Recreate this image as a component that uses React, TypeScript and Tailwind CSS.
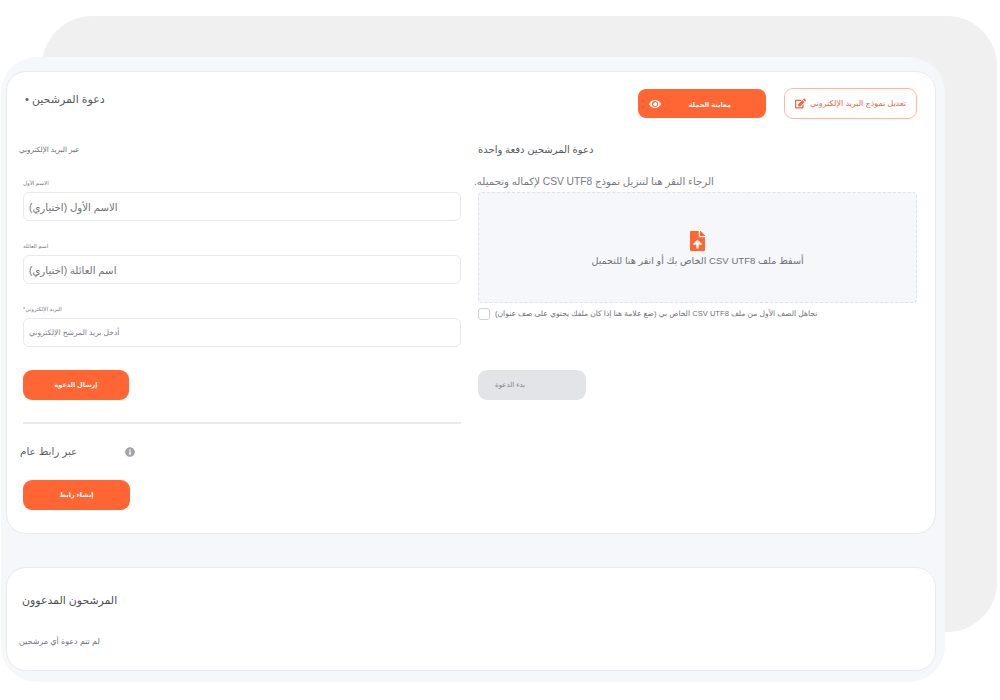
import { FaEdit, FaEye, FaFileUpload, FaInfoCircle } from "react-icons/fa";

const FONT = "font-['Liberation_Sans','DejaVu_Sans',sans-serif]";

function Field({ label, placeholder, small, mt }: { label: string; placeholder: string; small?: boolean; mt: string }) {
  return (
    <div className={mt}>
      <p dir="rtl" className="w-fit h-[10px] text-[5.5px] leading-[10px] text-[#777a80]">
        {label}
      </p>
      <div className="mt-[4px] h-[29px] flex items-center pl-[5px] bg-white border border-[#e9eaee] rounded-[6px]">
        <span dir="rtl" className={small ? "text-[7.6px] text-[#7b7d83]" : "mt-[2px] text-[10.2px] text-[#6f7176]"}>
          {placeholder}
        </span>
      </div>
    </div>
  );
}

function OrangeButton({ label, width }: { label: string; width: string }) {
  return (
    <button className={`${width} h-[30px] flex items-center justify-center bg-[#ff6633] rounded-[9px] text-white text-[6.5px] font-bold`}>
      <span dir="rtl">{label}</span>
    </button>
  );
}

export default function App() {
  return (
    <div className={`relative h-[700px] w-[1000px] overflow-hidden bg-white ${FONT}`}>
      {/* grey shape behind the panel */}
      <div className="absolute left-[42px] top-[16px] w-[955px] h-[616px] bg-[#f0f0f1] rounded-[50px]" />

      <div className="relative ml-[1px] top-[57px] w-[944px] h-[625px] bg-[#f6f7fb] rounded-[36px] pl-[5px] pr-[9px] pt-[14px]">
        <section className="h-[463px] bg-white rounded-[20px] border border-[#e9eaf0] pl-[16px] pr-[18px] pt-[16px]">
          <div className="flex justify-between items-start">
            <h1 dir="rtl" className="ml-[2px] mt-[3px] text-[11px] leading-[16px] text-[#55575c]">
              دعوة المرشحين •
            </h1>
            <div className="flex items-start gap-[18px]">
              <button className="mt-[1px] w-[128px] h-[29px] flex items-center justify-between pl-[11px] pr-[35px] bg-[#ff6633] rounded-[8px] text-white text-[6.7px] font-bold">
                <FaEye className="w-[12px] h-[12px]" />
                <span dir="rtl" className="mt-[3px]">معاينة الحملة</span>
              </button>
              <button className="w-[133px] h-[31px] flex items-center justify-center gap-[4px] bg-white border border-[#ffb9a3] rounded-[9px] text-[#e8663c] text-[8px]">
                <FaEdit className="w-[11px] h-[11px]" />
                <span dir="rtl" className="mt-[1px]">تعديل نموذج البريد الإلكتروني</span>
              </button>
            </div>
          </div>

          <div className="grid grid-cols-[438px_439px] gap-[17px]">
            <div>
              <p dir="rtl" className="w-fit -ml-[4px] mt-[25px] h-[12px] text-[7.2px] leading-[12px] text-[#6d6f74]">
                عبر البريد الإلكتروني
              </p>
              <Field mt="mt-[22px]" label="الاسم الأول" placeholder="الاسم الأول (اختياري)" />
              <Field mt="mt-[20px]" label="اسم العائلة" placeholder="اسم العائلة (اختياري)" />
              <Field mt="mt-[20px]" label="البريد الإلكتروني*" placeholder="أدخل بريد المرشح الإلكتروني" small />
              <div className="mt-[23px]">
                <OrangeButton label="إرسال الدعوة" width="w-[106px]" />
              </div>
              <hr className="mt-[22px] border-0 h-[2px] bg-[#e9eaec]" />
              <div className="mt-[18px] -ml-[3px] w-[115px] flex items-center justify-between">
                <span dir="rtl" className="text-[10.4px] leading-[20px] text-[#5d5f64]">عبر رابط عام</span>
                <FaInfoCircle className="w-[10px] h-[10px] text-[#a3a5aa]" />
              </div>
              <div className="mt-[18px]">
                <OrangeButton label="إنشاء رابط" width="w-[107px]" />
              </div>
            </div>

            <div>
              <p dir="rtl" className="w-fit mt-[23px] h-[16px] text-[10px] leading-[16px] text-[#55575c]">
                دعوة المرشحين دفعة واحدة
              </p>
              <p dir="rtl" className="w-fit -ml-[4px] mt-[16px] h-[16px] text-[10.2px] leading-[16px] text-[#77797e]">
                الرجاء النقر هنا لتنزيل نموذج CSV UTF8 لإكماله وتحميله.
              </p>
              <div className="mt-[2px] h-[111px] pt-[3px] flex flex-col items-center justify-center bg-[#f6f7fb] border border-dashed border-[#dfe1e8] rounded-[4px]">
                <FaFileUpload className="w-[15px] h-[20px] text-[#ff6633]" />
                <p dir="rtl" className="mt-[3px] text-[9.6px] leading-[14px] text-[#6f7176]">
                  أسقط ملف CSV UTF8 الخاص بك أو انقر هنا للتحميل
                </p>
              </div>
              <div className="mt-[4px] flex items-center gap-[5px]">
                <span className="w-[12px] h-[12px] bg-white border border-[#cfd1d6] rounded-[3px]" />
                <span dir="rtl" className="text-[7.6px] leading-[14px] text-[#6f7176]">
                  تجاهل الصف الأول من ملف CSV UTF8 الخاص بي (ضع علامة هنا إذا كان ملفك يحتوي على صف عنوان)
                </span>
              </div>
              <button className="mt-[49px] w-[108px] h-[30px] flex items-center pl-[17px] bg-[#e3e4e8] rounded-[9px] text-[7px] text-[#808289]">
                <span dir="rtl">بدء الدعوة</span>
              </button>
            </div>
          </div>
        </section>

        <section className="mt-[33px] h-[104px] bg-white rounded-[20px] border border-[#e9eaf0] px-[16px] pt-[24px]">
          <h2 dir="rtl" className="w-fit -ml-[1px] text-[10.9px] leading-[16px] text-[#4b4d52]">
            المرشحون المدعوون
          </h2>
          <p dir="rtl" className="w-fit -ml-[4px] mt-[28px] text-[8px] leading-[12px] text-[#707277]">
            لم تتم دعوة أي مرشحين
          </p>
        </section>
      </div>
    </div>
  );
}
